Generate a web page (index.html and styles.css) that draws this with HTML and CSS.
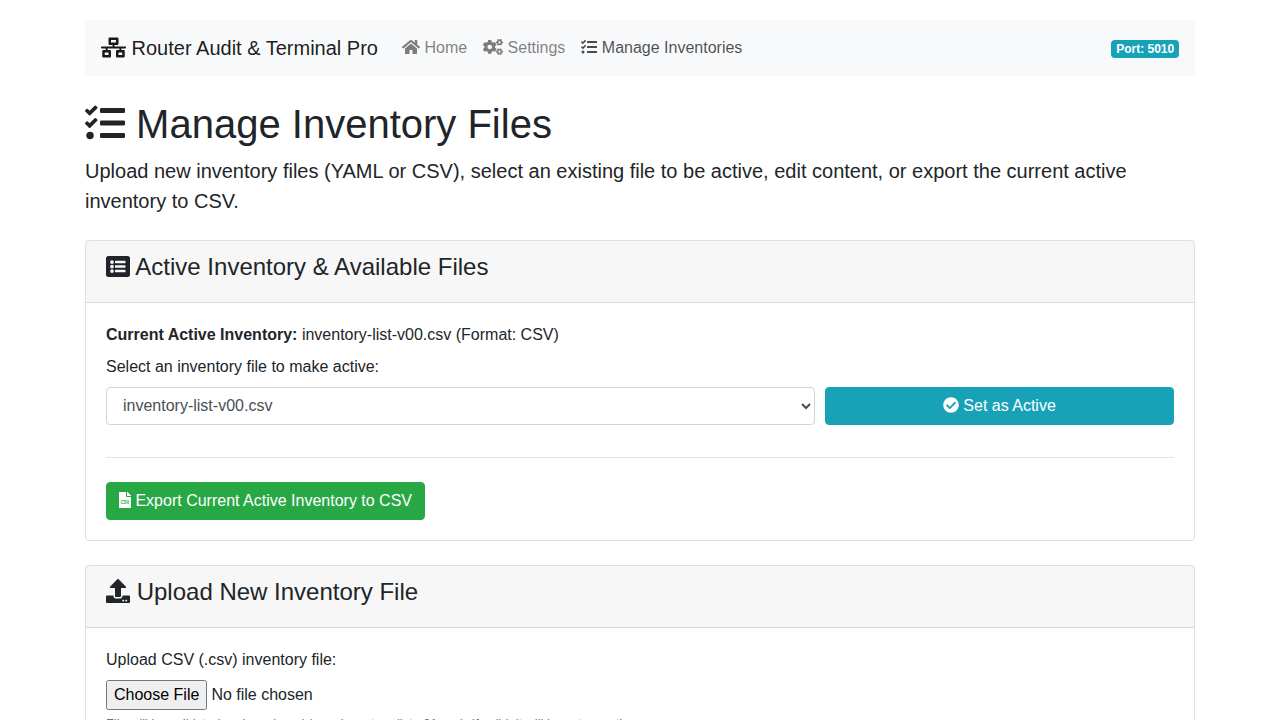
FILE: index.html
```html
<!DOCTYPE html>
<html lang="en">
<head>
<meta charset="utf-8">
<title>Manage Inventory Files</title>
<link rel="stylesheet" href="styles.css">
</head>
<body>
<svg class="sprite" aria-hidden="true">
  <symbol id="tasks" viewBox="0 0 512 512"><path d="M139.61 35.5a12 12 0 0 0-17 0L58.93 98.81l-22.7-22.12a12 12 0 0 0-17 0L3.53 92.41a12 12 0 0 0 0 17l47.59 47.4a12.78 12.78 0 0 0 17.61 0l15.59-15.62L156.52 69a12.09 12.09 0 0 0 .09-17zm0 159.19a12 12 0 0 0-17 0l-63.68 63.72-22.7-22.1a12 12 0 0 0-17 0L3.53 252a12 12 0 0 0 0 17L51 316.5a12.77 12.77 0 0 0 17.6 0l15.7-15.69 72.2-72.22a12 12 0 0 0 .09-16.9zM64 368c-26.49 0-48.59 21.5-48.59 48S37.53 464 64 464a48 48 0 0 0 0-96zm432 16H208a16 16 0 0 0-16 16v32a16 16 0 0 0 16 16h288a16 16 0 0 0 16-16v-32a16 16 0 0 0-16-16zm0-320H208a16 16 0 0 0-16 16v32a16 16 0 0 0 16 16h288a16 16 0 0 0 16-16V80a16 16 0 0 0-16-16zm0 160H208a16 16 0 0 0-16 16v32a16 16 0 0 0 16 16h288a16 16 0 0 0 16-16v-32a16 16 0 0 0-16-16z"/></symbol>
  <symbol id="small-cog" viewBox="412 0 228 212"><path d="M512.1 191l-8.2 14.3c-3 5.3-9.4 7.5-15.1 5.4-11.8-4.4-22.6-10.7-32.1-18.6-4.6-3.8-5.8-10.5-2.8-15.7l8.2-14.3c-6.9-8-12.3-17.3-15.9-27.4h-16.5c-6 0-11.2-4.3-12.2-10.3-2-12-2.1-24.6 0-37.1 1-6 6.2-10.4 12.2-10.4h16.5c3.6-10.1 9-19.4 15.9-27.4l-8.2-14.3c-3-5.2-1.9-11.9 2.8-15.7 9.5-7.9 20.4-14.2 32.1-18.6 5.7-2.1 12.1.1 15.1 5.4l8.2 14.3c10.5-1.9 21.2-1.9 31.7 0L552 6.3c3-5.3 9.4-7.5 15.1-5.4 11.8 4.4 22.6 10.7 32.1 18.6 4.6 3.8 5.8 10.5 2.8 15.7l-8.2 14.3c6.9 8 12.3 17.3 15.9 27.4h16.5c6 0 11.2 4.3 12.2 10.3 2 12 2.1 24.6 0 37.1-1 6-6.2 10.4-12.2 10.4h-16.5c-3.6 10.1-9 19.4-15.9 27.4l8.2 14.3c3 5.2 1.9 11.9-2.8 15.7-9.5 7.9-20.4 14.2-32.1 18.6-5.7 2.1-12.1-.1-15.1-5.4l-8.2-14.3c-10.4 1.9-21.2 1.9-31.7 0zm-10.5-58.8c38.5 29.6 82.4-14.3 52.8-52.8-38.5-29.7-82.4 14.3-52.8 52.8z"/></symbol>
</svg>
<div class="container">
  <nav class="navbar">
    <a class="brand"><svg class="icon icon-wide" viewBox="0 0 640 512"><path d="M640 264v-16c0-8.84-7.16-16-16-16H344v-40h72c17.67 0 32-14.33 32-32V32c0-17.67-14.33-32-32-32H224c-17.67 0-32 14.33-32 32v128c0 17.67 14.33 32 32 32h72v40H16c-8.84 0-16 7.16-16 16v16c0 8.84 7.16 16 16 16h104v40H64c-17.67 0-32 14.33-32 32v128c0 17.67 14.33 32 32 32h160c17.67 0 32-14.33 32-32V352c0-17.67-14.33-32-32-32h-56v-40h304v40h-56c-17.67 0-32 14.33-32 32v128c0 17.67 14.33 32 32 32h160c17.67 0 32-14.33 32-32V352c0-17.67-14.33-32-32-32h-56v-40h104c8.84 0 16-7.16 16-16zM256 128V64h128v64H256zm-64 320H96v-64h96v64zm352 0h-96v-64h96v64z"/></svg> Router Audit &amp; Terminal Pro</a>
    <div class="nav-links">
      <a class="nav-link"><svg class="icon icon-home" viewBox="0 0 576 512"><path d="M280.37 148.26L96 300.11V464a16 16 0 0 0 16 16l112.06-.29a16 16 0 0 0 15.92-16V368a16 16 0 0 1 16-16h64a16 16 0 0 1 16 16v95.64a16 16 0 0 0 16 16.05L464 480a16 16 0 0 0 16-16V300L295.67 148.26a12.19 12.19 0 0 0-15.3 0zM571.6 251.47L488 182.56V44.05a12 12 0 0 0-12-12h-56a12 12 0 0 0-12 12v72.61L318.47 43a48 48 0 0 0-61 0L4.34 251.47a12 12 0 0 0-1.6 16.9l25.5 31A12 12 0 0 0 45.15 301l235.22-193.74a12.19 12.19 0 0 1 15.3 0L530.9 301a12 12 0 0 0 16.9-1.6l25.5-31a12 12 0 0 0-1.7-16.93z"/></svg> Home</a>
      <a class="nav-link"><svg class="icon icon-wide" viewBox="0 0 640 512"><path d="M386.3 286.1l33.7 16.8c10.1 5.8 14.5 18.1 10.5 29.1-8.9 24.2-26.4 46.4-42.6 65.8-7.4 8.9-20.2 11.1-30.3 5.3l-29.1-16.8c-16 13.7-34.6 24.6-54.9 31.7v33.6c0 11.6-8.3 21.6-19.7 23.6-24.6 4.2-50.4 4.4-75.9 0-11.5-2-20-11.9-20-23.6V418c-20.3-7.2-38.9-18-54.9-31.7L74 403c-10 5.8-22.9 3.6-30.3-5.3-16.2-19.4-33.3-41.6-42.2-65.7-4-10.9.4-23.2 10.5-29.1l33.3-16.8c-3.9-20.9-3.9-42.4 0-63.4L12 205.8c-10.1-5.8-14.6-18.1-10.5-29 8.9-24.2 26-46.4 42.2-65.8 7.4-8.9 20.2-11.1 30.3-5.3l29.1 16.8c16-13.7 34.6-24.6 54.9-31.7V57.1c0-11.5 8.2-21.5 19.6-23.5 24.6-4.2 50.5-4.4 76-.1 11.5 2 20 11.9 20 23.6v33.6c20.3 7.2 38.9 18 54.9 31.7l29.1-16.8c10-5.8 22.9-3.6 30.3 5.3 16.2 19.4 33.2 41.6 42.1 65.8 4 10.9.1 23.2-10 29.1l-33.7 16.8c3.9 21 3.9 42.5 0 63.5zm-117.6 21.1c59.2-77-28.7-164.9-105.7-105.7-59.2 77 28.7 164.9 105.7 105.7z"/><use href="#small-cog" x="412" y="0" width="228" height="212"/><use href="#small-cog" x="412" y="299" width="228" height="212"/></svg> Settings</a>
      <a class="nav-link active"><svg class="icon"><use href="#tasks"/></svg> Manage Inventories</a>
    </div>
    <span class="badge">Port: 5010</span>
  </nav>

  <h1><svg class="icon"><use href="#tasks"/></svg> Manage Inventory Files</h1>
  <p class="lead">Upload new inventory files (YAML or CSV), select an existing file to be active, edit content, or export the current active inventory to CSV.</p>

  <section class="card">
    <header class="card-header">
      <h2><svg class="icon icon-list" viewBox="0 0 512 512"><path fill-rule="evenodd" d="M464 480H48c-26.51 0-48-21.49-48-48V80c0-26.51 21.49-48 48-48h416c26.51 0 48 21.49 48 48v352c0 26.51-21.49 48-48 48zM128 120a40 40 0 1 0 0 80 40 40 0 1 0 0-80zm0 96a40 40 0 1 0 0 80 40 40 0 1 0 0-80zm0 96a40 40 0 1 0 0 80 40 40 0 1 0 0-80zm288-136v-32a12 12 0 0 0-12-12H204a12 12 0 0 0-12 12v32a12 12 0 0 0 12 12h200a12 12 0 0 0 12-12zm0 96v-32a12 12 0 0 0-12-12H204a12 12 0 0 0-12 12v32a12 12 0 0 0 12 12h200a12 12 0 0 0 12-12zm0 96v-32a12 12 0 0 0-12-12H204a12 12 0 0 0-12 12v32a12 12 0 0 0 12 12h200a12 12 0 0 0 12-12z"/></svg> Active Inventory &amp; Available Files</h2>
    </header>
    <div class="card-body">
      <p class="current"><strong>Current Active Inventory:</strong> inventory-list-v00.csv (Format: CSV)</p>
      <label class="label" for="inventory">Select an inventory file to make active:</label>
      <div class="select-row">
        <select class="select" id="inventory"><option>inventory-list-v00.csv</option></select>
        <button class="btn btn-info" type="button"><svg class="icon" viewBox="0 0 512 512"><path d="M504 256c0 136.967-111.033 248-248 248S8 392.967 8 256 119.033 8 256 8s248 111.033 248 248zM227.314 387.314l184-184c6.248-6.248 6.248-16.379 0-22.627l-22.627-22.627c-6.248-6.249-16.379-6.249-22.628 0L216 308.118l-70.059-70.059c-6.248-6.248-16.379-6.248-22.628 0l-22.627 22.627c-6.248 6.248-6.248 16.379 0 22.627l104 104c6.249 6.249 16.379 6.249 22.628.001z"/></svg> Set as Active</button>
      </div>
      <hr class="divider">
      <button class="btn btn-success" type="button"><svg class="icon icon-file" viewBox="0 0 384 512"><path d="M224 136V0H24C10.700 0 0 10.700 0 24v464c0 13.300 10.700 24 24 24h336c13.300 0 24-10.700 24-24V160H248c-13.200 0-24-10.800-24-24zM377 105L279.100 7c-4.500-4.500-10.600-7-17-7H256v128h128v-6.100c0-6.300-2.500-12.400-7-16.900z"/><text class="file-type" x="192" y="388" text-anchor="middle" textLength="272" lengthAdjust="spacingAndGlyphs">CSV</text></svg> Export Current Active Inventory to CSV</button>
    </div>
  </section>

  <section class="card">
    <header class="card-header">
      <h2><svg class="icon" viewBox="0 0 512 512"><path d="M296 384h-80c-13.300 0-24-10.700-24-24V192h-87.700c-17.800 0-26.700-21.500-14.100-34.100L242.300 5.700c7.500-7.500 19.800-7.500 27.300 0l152.200 152.200c12.600 12.600 3.700 34.100-14.100 34.100H320v168c0 13.300-10.700 24-24 24zm216-8v112c0 13.300-10.700 24-24 24H24c-13.300 0-24-10.700-24-24V376c0-13.300 10.700-24 24-24h136v8c0 30.900 25.100 56 56 56h80c30.900 0 56-25.100 56-56v-8h136c13.300 0 24 10.700 24 24zm-124 88c0-11-9-20-20-20s-20 9-20 20 9 20 20 20 20-9 20-20zm64 0c0-11-9-20-20-20s-20 9-20 20 9 20 20 20 20-9 20-20z"/></svg> Upload New Inventory File</h2>
    </header>
    <div class="card-body">
      <label class="label" for="csv-file">Upload CSV (.csv) inventory file:</label>
      <input class="file-input" id="csv-file" type="file">
      <small class="help">File will be validated and versioned (e.g., inventory-list-v01.csv). If valid, it will be set as active.</small>
    </div>
  </section>
</div>
</body>
</html>
```
FILE: styles.css
```css
*, *::before, *::after { box-sizing: border-box; }
html { overflow: hidden; }
body {
  height: 720px;
  margin: 0;
  padding-top: 20px;
  overflow: hidden;
  background: #fff;
  color: #212529;
  font: 400 16px/1.5 "Liberation Sans", Arial, sans-serif;
}
.sprite { display: none; }
.container { width: 1110px; margin: 0 auto; }
.icon {
  width: 1em;
  height: 1em;
  fill: currentColor;
  vertical-align: -0.125em;
  overflow: visible;
}
.icon-wide { width: 1.25em; }
.icon-home { width: 1.125em; }
.icon-file { width: 0.75em; }
.brand .icon { transform: translateY(-0.5px); }
.icon-list { transform: translateY(0.5px); }
.file-type { fill: #28a745; font: 700 200px "Liberation Sans", Arial, sans-serif; }

.navbar {
  display: flex;
  align-items: center;
  height: 56px;
  margin-bottom: 24px;
  padding: 8px 16px;
  background: #f8f9fa;
}
.brand { margin-right: 16px; color: rgba(0, 0, 0, .9); font-size: 20px; white-space: nowrap; }
.nav-links { display: flex; flex: 1; }
.nav-link { padding: 8px; color: rgba(0, 0, 0, .5); }
.nav-link.active { color: rgba(0, 0, 0, .7); }
.badge {
  margin-top: 2px;
  padding: 3px 4.8px;
  border-radius: 4px;
  background: #17a2b8;
  color: #fff;
  font-size: 12px;
  font-weight: 700;
  line-height: 12px;
}

h1, h2 { margin: 0 0 8px; font-weight: 400; line-height: 1.2; }
h1 { font-size: 40px; }
h2 { font-size: 24px; }
.lead { margin: 0 0 24px; font-size: 20px; }

.card {
  margin-bottom: 24px;
  border: 1px solid rgba(0, 0, 0, .125);
  border-radius: 4px;
}
.card-header {
  padding: 12px 20px;
  border-bottom: 1px solid rgba(0, 0, 0, .125);
  background: rgba(0, 0, 0, .03);
}
.card-body { padding: 20px; }
.current { margin: 0 0 8px; }
.label { display: block; margin-bottom: 8px; }
.select-row { display: grid; grid-template-columns: 708.67px 1fr; gap: 10px; }
.select {
  height: 38px;
  padding: 6px 12px;
  border: 1px solid #ced4da;
  border-radius: 4px;
  background: #fff;
  color: #495057;
  font: inherit;
}
.btn {
  display: block;
  height: 38px;
  padding: 6px 12px;
  border: 1px solid transparent;
  border-radius: 4px;
  color: #fff;
  font: inherit;
}
.btn-info { border-color: #17a2b8; background: #17a2b8; }
.btn-success { border-color: #28a745; background: #28a745; }
.divider { margin: 32px 0 24px; border: 0; border-top: 1px solid rgba(0, 0, 0, .1); }
.file-input { display: block; width: 100%; height: 30px; font: inherit; }
.file-input::file-selector-button { height: 30px; font: inherit; }
.help { display: block; margin-top: 4px; color: #6c757d; font-size: 12.8px; }
```
